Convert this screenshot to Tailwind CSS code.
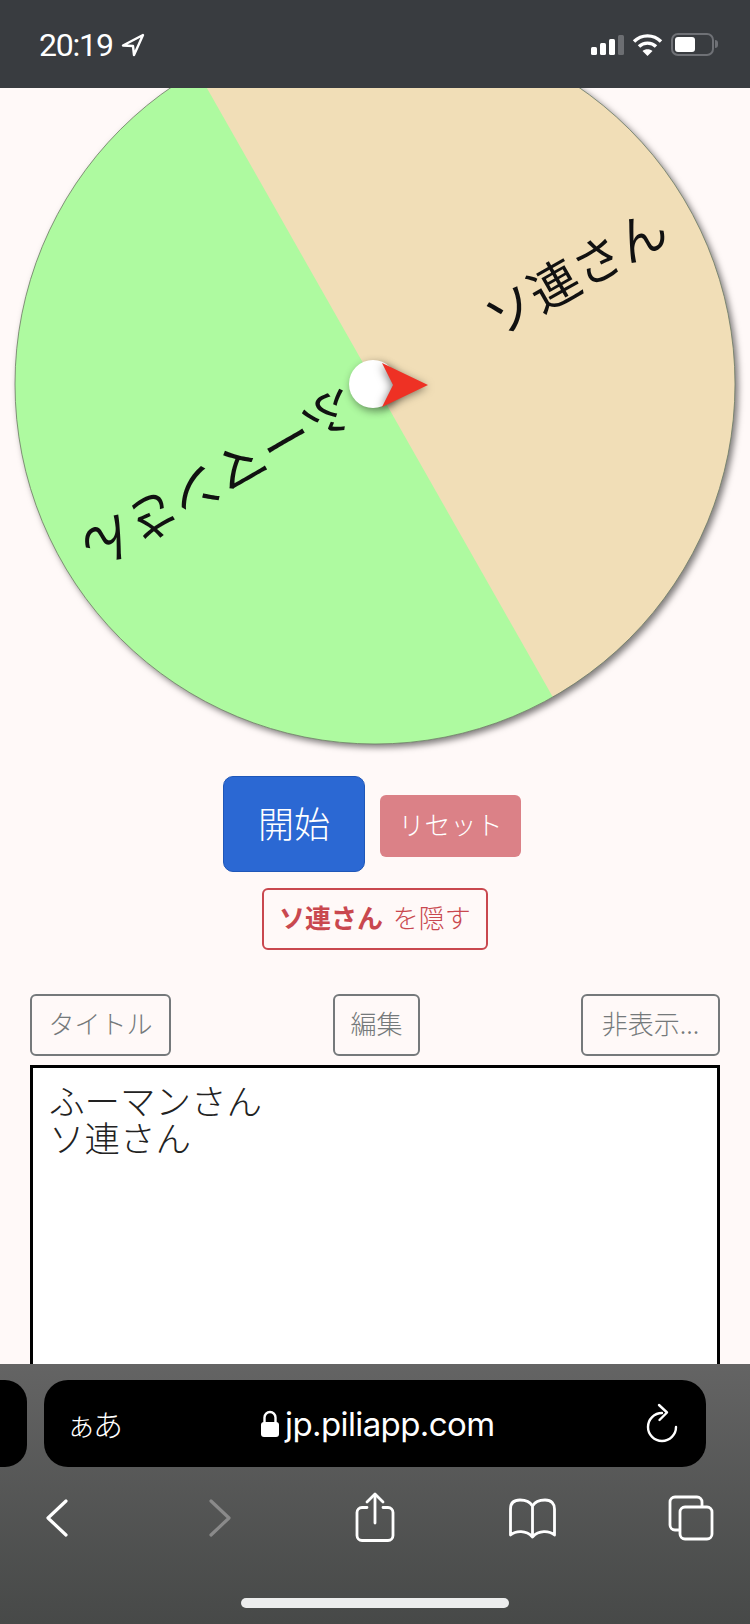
<!DOCTYPE html>
<html lang="ja">
<head>
  <meta charset="UTF-8" />
  <meta name="viewport" content="width=device-width, initial-scale=1.0" />
  <title>ルーレット</title>
  <script src="https://cdn.jsdelivr.net/npm/@tailwindcss/browser@4"></script>
</head>
<body class="bg-[#fff9f8] font-['Noto_Sans_CJK_JP','Noto_Sans_CJK_SC',sans-serif] overflow-hidden">
  <div class="w-[750px] h-[1624px] flex flex-col">

    <!-- status bar -->
    <div class="h-[88px] shrink-0 bg-[#393c40] flex items-start text-white relative z-10">
      <span class="ml-[39px] mt-[27px] text-[32px] leading-[36px] font-normal font-['Roboto',sans-serif] tracking-[-1.2px]">20:19</span>
      <svg class="ml-[8px] mt-[33px]" width="24" height="24" viewBox="0 0 24 24" fill="none" stroke="white" stroke-width="2.4" stroke-linejoin="round"><path d="M22 2 L2 12.5 L12 13 L13 22 Z"/></svg>
      <div class="ml-auto mr-[32px] mt-[33px] flex items-start">
        <svg width="36" height="24" viewBox="0 0 36 24"><rect x="1" y="14" width="6" height="8" rx="1.5" fill="white"/><rect x="10" y="10" width="6" height="12" rx="1.5" fill="white"/><rect x="19" y="6" width="6" height="16" rx="1.5" fill="white"/><rect x="28" y="2" width="6" height="20" rx="1.5" fill="#6c6e72"/></svg>
        <svg class="ml-[6px]" width="31" height="24" viewBox="0 0 31 24" fill="none" stroke="white" stroke-width="3.4"><path d="M2 8.5 C9.5 1 21.5 1 29 8.5"/><path d="M7 13.5 C11.5 9 19.5 9 24 13.5"/><path d="M15.5 23 L10.5 18 C13 15.5 18 15.5 20.5 18 Z" fill="white" stroke="none"/></svg>
        <div class="ml-[8px] w-[43px] h-[23px] border-2 border-[#6f7176] rounded-[7px] p-[2px]">
          <div class="w-[20px] h-full bg-white rounded-[3px]"></div>
        </div>
        <div class="w-[3px] h-[8px] mt-[7px] ml-[1px] bg-[#6f7176] rounded-r-full"></div>
      </div>
    </div>

    <!-- page -->
    <div class="flex-1 min-h-0 overflow-hidden">
      <!-- wheel, drawn in screen coordinates -->
      <svg class="block -mt-[72px] drop-shadow-[3px_3px_3px_rgba(0,0,0,0.5)]" width="750" height="740" viewBox="0 16 750 740">
        <circle cx="375" cy="384" r="360" fill="#f1deb7"/>
        <path d="M375 384 L197.2 71 A360 360 0 0 0 15 384 A360 360 0 0 0 552.8 697 Z" fill="#aefaa0"/>
        <circle cx="375" cy="384" r="360" fill="none" stroke="#6b7a66" stroke-width="0.8"/>
        <text x="574" y="270" transform="rotate(-29.6 574 270)" text-anchor="middle" dominant-baseline="central" font-size="50" fill="#111">ソ連さん</text>
        <text x="221" y="481" transform="rotate(150 221 481)" text-anchor="middle" dominant-baseline="central" font-size="51" fill="#111">ふーマンさん</text>
      </svg>
      <svg class="block -mt-[740px] relative" width="750" height="740" viewBox="0 16 750 740">
        <circle class="drop-shadow-[2px_3px_4px_rgba(0,0,0,0.45)]" cx="373" cy="384" r="24" fill="white"/>
        <path class="drop-shadow-[-1px_2px_4px_rgba(0,0,0,0.5)]" d="M382 363 L428 385 L382 407 L393 385 Z" fill="#ee3124"/>
      </svg>

      <div class="flex justify-center items-center gap-[15px] pr-[6px] mt-[20px]">
        <button class="w-[142px] h-[96px] pb-[4px] bg-[#2b68d3] border border-[#1f57b8] rounded-[10px] text-white text-[36px] font-light">開始</button>
        <button class="w-[141px] h-[62px] mt-[4px] pb-[6px] bg-[#db8187] rounded-[6px] text-white text-[26px] font-light">リセット</button>
      </div>
      <div class="flex justify-center mt-[16px]">
        <button class="w-[226px] h-[62px] pb-[6px] border-2 border-[#c9484f] rounded-[6px] text-[#c9484f] text-[26px] font-light"><b class="font-bold mr-[4px]">ソ連さん</b> を隠す</button>
      </div>

      <div class="flex justify-between mx-[30px] mt-[44px] text-[#75797b] text-[26px] font-light">
        <button class="w-[141px] h-[62px] pb-[6px] border-2 border-[#75797b] rounded-[6px]">タイトル</button>
        <button class="w-[87px] h-[62px] pb-[6px] ml-[1px] border-2 border-[#75797b] rounded-[6px]">編集</button>
        <button class="w-[139px] h-[62px] pb-[6px] border-2 border-[#75797b] rounded-[6px]">非表示...</button>
      </div>
      <textarea readonly class="block mx-[30px] mt-[9px] w-[690px] h-[400px] border-[3px] border-black bg-white px-[16px] py-[13px] text-[35.5px] leading-[37px] text-[#222] font-light resize-none outline-none">ふーマンさん
ソ連さん</textarea>
    </div>

    <!-- safari bottom bar -->
    <div class="h-[260px] shrink-0 bg-gradient-to-b from-[#646464] to-[#474948] text-white relative z-10">
      <div class="flex h-[87px] mt-[16px] gap-[17px]">
        <div class="w-[27px] bg-black rounded-r-[22px]"></div>
        <div class="w-[662px] bg-black rounded-[24px] flex items-center relative">
          <span class="ml-[22px] text-[30px] font-light tracking-[-3px]">ぁあ</span>
          <div class="absolute left-[216px] top-[30px] flex items-center">
            <svg width="20" height="28" viewBox="0 0 20 28"><path d="M4.5 13 V7.5 a5.5 5.5 0 0 1 11 0 V13" fill="none" stroke="white" stroke-width="2.4"/><rect x="1" y="12" width="18" height="15" rx="3" fill="white"/></svg>
            <span class="ml-[5px] text-[33px] leading-[28px] font-['Inter',sans-serif] tracking-[-0.6px]">jp.piliapp.com</span>
          </div>
          <svg class="ml-auto mr-[25px]" width="36" height="42" viewBox="0 0 36 42" fill="none" stroke="white" stroke-width="2.4" stroke-linecap="round" stroke-linejoin="round"><path d="M17 10 A14 14 0 1 0 31 24"/><path d="M14 2 L22 9.5 L14.5 17"/></svg>
        </div>
      </div>
      <div class="flex mt-[20px]">
        <svg class="ml-[27px]" width="60" height="60" viewBox="0 0 60 60" fill="none" stroke="white" stroke-width="3.2" stroke-linecap="round" stroke-linejoin="round"><path d="M39 14 L21 31 L39 48" /></svg>
        <svg class="ml-[103px]" width="60" height="60" viewBox="0 0 60 60" fill="none" stroke="#8a8a8a" stroke-width="3.2" stroke-linecap="round" stroke-linejoin="round"><path d="M21 14 L39 31 L21 48" /></svg>
        <svg class="ml-[95px]" width="60" height="60" viewBox="0 0 60 60" fill="none" stroke="white" stroke-width="2.8" stroke-linecap="round" stroke-linejoin="round"><path d="M22 20.5 H17 a5 5 0 0 0 -5 5 V48.5 a5 5 0 0 0 5 5 H43 a5 5 0 0 0 5 -5 V25.5 a5 5 0 0 0 -5 -5 H38"/><path d="M30 8 V36"/><path d="M22 15 L30 7 L38 15"/></svg>
        <svg class="ml-[97px]" width="60" height="60" viewBox="0 0 60 60" fill="none" stroke="white" stroke-width="2.8" stroke-linejoin="round"><path d="M30.5 19 C28 14.5 23 13 18 13 C11 13 8.5 17 8.5 22 V48 C14 43.5 24 43 30.5 50 C37 43 47 43.5 52.5 48 V22 C52.5 17 50 13 43 13 C38 13 33 14.5 30.5 19 Z M30.5 19 V50"/></svg>
        <svg class="ml-[99px]" width="60" height="60" viewBox="0 0 60 60" fill="none" stroke="white" stroke-width="2.8" stroke-linecap="round"><path d="M41 19 V15 a5 5 0 0 0 -5 -5 H14 a5 5 0 0 0 -5 5 V38 a5 5 0 0 0 5 5 H18"/><rect x="19" y="20" width="32" height="32" rx="5"/></svg>
      </div>
      <div class="w-[268px] h-[10px] bg-[#eceded] rounded-full ml-[241px] mt-[51px]"></div>
    </div>
  </div>
</body>
</html>
